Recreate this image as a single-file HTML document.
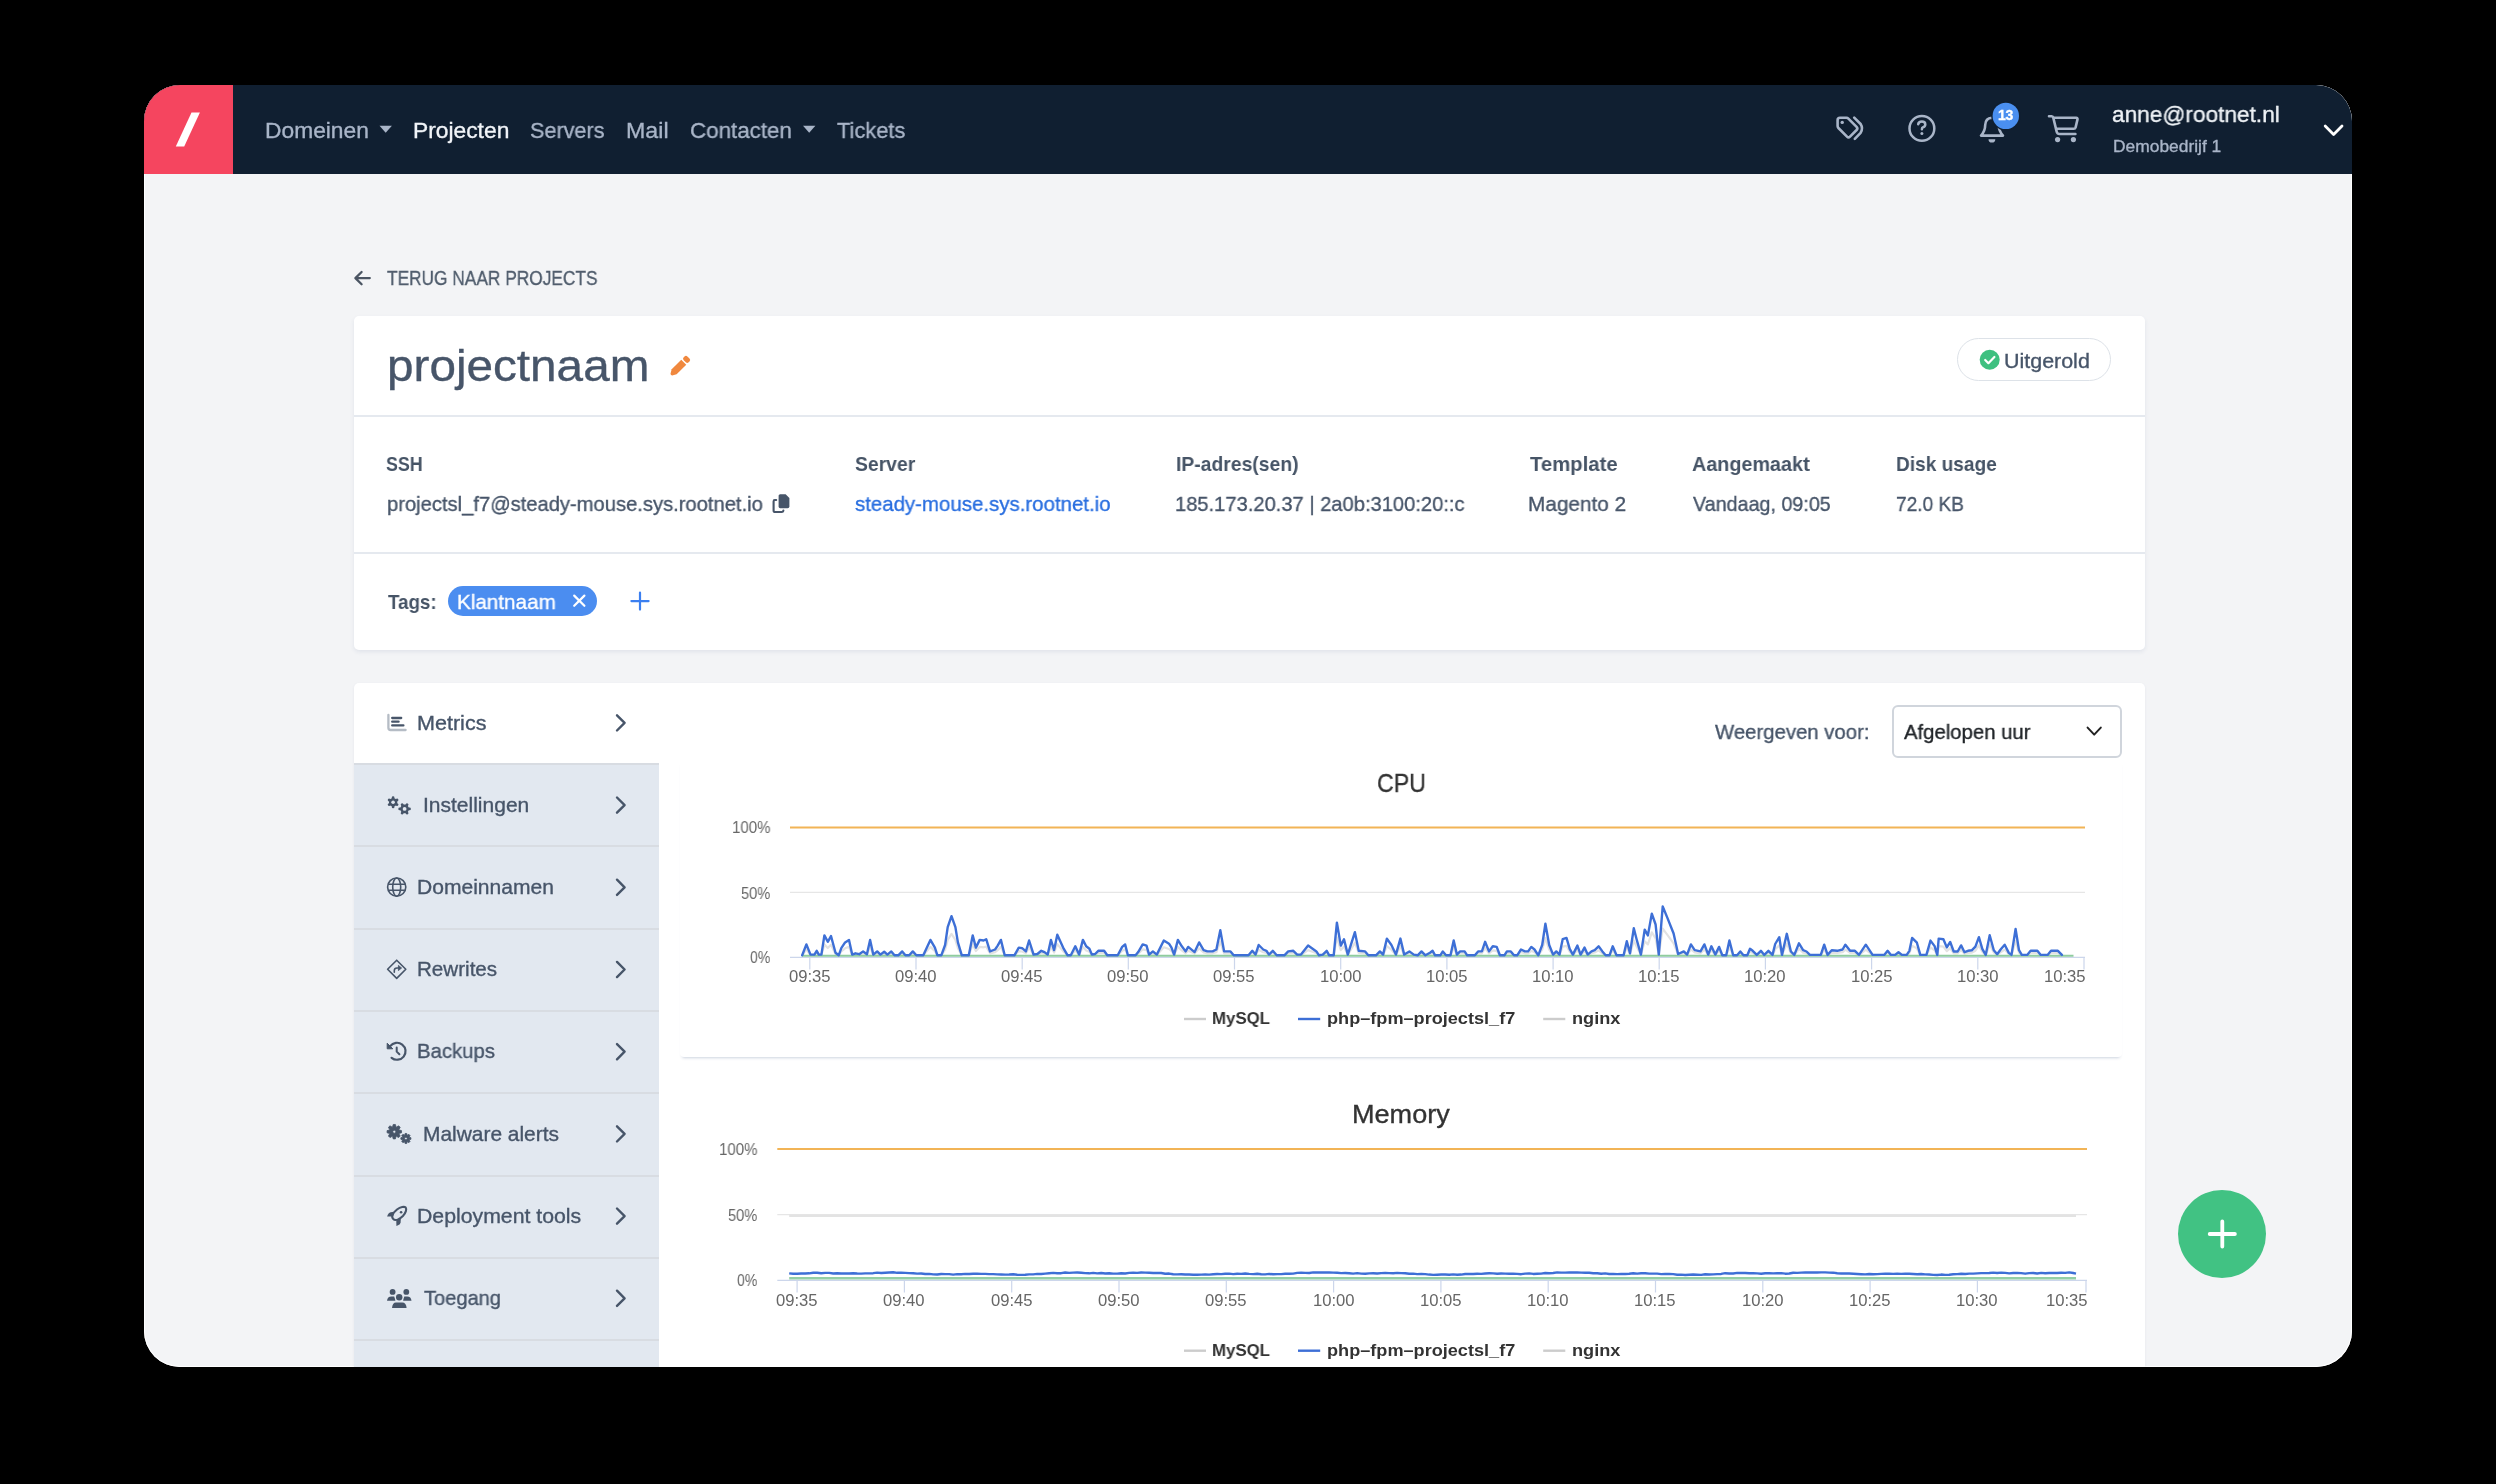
<!DOCTYPE html>
<html><head><meta charset="utf-8"><title>projectnaam</title>
<style>
html,body{margin:0;padding:0;background:#000;width:2496px;height:1484px;overflow:hidden}
#win{position:absolute;left:144px;top:85px;width:2208px;height:1281.5px;border-radius:36px;overflow:hidden;background:#f3f4f6;box-shadow:inset 0 0 0 1px #fff}
#in{position:absolute;left:-144px;top:-85px;width:2496px;height:1484px}
.b{position:absolute}
.t{position:absolute;white-space:nowrap;line-height:1;font-family:"Liberation Sans",sans-serif;transform-origin:0 0;will-change:transform;-webkit-text-stroke:0.35px currentColor}
svg{position:absolute;left:0;top:0}
</style></head><body>
<div id="win"><div id="in">
<div class="b" style="left:144px;top:85px;width:2208px;height:89px;background:#101f31"></div><div class="b" style="left:144px;top:85px;width:89px;height:89px;background:#f5455f"></div><div class="b" style="left:354px;top:316px;width:1791px;height:333.5px;background:#fff;border-radius:5px;box-shadow:0 2px 4px rgba(40,70,120,0.09)"></div><div class="b" style="left:354px;top:415px;width:1791px;height:1.6px;background:#e5e9ef"></div><div class="b" style="left:354px;top:552px;width:1791px;height:1.6px;background:#e5e9ef"></div><div class="b" style="left:1957.4px;top:338.2px;width:153.6px;height:43.3px;box-sizing:border-box;border:1.5px solid #dde2e8;border-radius:22px;background:#fff"></div><div class="b" style="left:447.5px;top:586px;width:149.2px;height:30.3px;background:#4b8df0;border-radius:16px"></div><div class="b" style="left:354px;top:683px;width:1791px;height:800px;background:#fff;border-radius:5px;box-shadow:0 1px 3px rgba(40,70,120,0.07)"></div><div class="b" style="left:354px;top:763px;width:304.5px;height:720px;background:#e2e8f0"></div><div class="b" style="left:354px;top:763.0px;width:304.5px;height:2px;background:#d8dce2"></div><div class="b" style="left:354px;top:845.3px;width:304.5px;height:2px;background:#d8dce2"></div><div class="b" style="left:354px;top:927.6px;width:304.5px;height:2px;background:#d8dce2"></div><div class="b" style="left:354px;top:1009.9px;width:304.5px;height:2px;background:#d8dce2"></div><div class="b" style="left:354px;top:1092.2px;width:304.5px;height:2px;background:#d8dce2"></div><div class="b" style="left:354px;top:1174.5px;width:304.5px;height:2px;background:#d8dce2"></div><div class="b" style="left:354px;top:1256.8px;width:304.5px;height:2px;background:#d8dce2"></div><div class="b" style="left:354px;top:1339.1px;width:304.5px;height:2px;background:#d8dce2"></div><div class="b" style="left:1891.7px;top:705.3px;width:230.3px;height:52.7px;box-sizing:border-box;border:2px solid #d0d5dc;border-radius:6px;background:#fff"></div><div class="b" style="left:680.3px;top:760px;width:1442.2px;height:296.5px;background:#fff;border-radius:4px;box-shadow:0 3px 3px -2px rgba(40,70,120,0.24)"></div><div class="b" style="left:2178.1px;top:1189.8px;width:88.4px;height:88.4px;background:#41c283;border-radius:50%"></div>
<svg width="2496" height="1484" viewBox="0 0 2496 1484"><line x1="790" y1="892.4" x2="2085" y2="892.4" stroke="#e6e6e6" stroke-width="1.2"/><line x1="790" y1="827.6" x2="2085" y2="827.6" stroke="#f2b456" stroke-width="2"/><line x1="790" y1="957.4" x2="2085" y2="957.4" stroke="#ccd6eb" stroke-width="1.2"/><line x1="809.8" y1="957.4" x2="809.8" y2="969.5" stroke="#ccd6eb" stroke-width="1.2"/><line x1="916.0" y1="957.4" x2="916.0" y2="969.5" stroke="#ccd6eb" stroke-width="1.2"/><line x1="1022.2" y1="957.4" x2="1022.2" y2="969.5" stroke="#ccd6eb" stroke-width="1.2"/><line x1="1128.3" y1="957.4" x2="1128.3" y2="969.5" stroke="#ccd6eb" stroke-width="1.2"/><line x1="1234.5" y1="957.4" x2="1234.5" y2="969.5" stroke="#ccd6eb" stroke-width="1.2"/><line x1="1340.7" y1="957.4" x2="1340.7" y2="969.5" stroke="#ccd6eb" stroke-width="1.2"/><line x1="1446.9" y1="957.4" x2="1446.9" y2="969.5" stroke="#ccd6eb" stroke-width="1.2"/><line x1="1553.1" y1="957.4" x2="1553.1" y2="969.5" stroke="#ccd6eb" stroke-width="1.2"/><line x1="1659.2" y1="957.4" x2="1659.2" y2="969.5" stroke="#ccd6eb" stroke-width="1.2"/><line x1="1765.4" y1="957.4" x2="1765.4" y2="969.5" stroke="#ccd6eb" stroke-width="1.2"/><line x1="1871.6" y1="957.4" x2="1871.6" y2="969.5" stroke="#ccd6eb" stroke-width="1.2"/><line x1="1977.8" y1="957.4" x2="1977.8" y2="969.5" stroke="#ccd6eb" stroke-width="1.2"/><line x1="2084.0" y1="957.4" x2="2084.0" y2="969.5" stroke="#ccd6eb" stroke-width="1.2"/><polyline points="802.2,955.4 806.4,949.4 810.5,955.0 814.4,955.0 816.7,952.9 818.8,955.0 821.4,955.0 824.4,944.4 827.8,948.0 831.0,944.8 835.5,954.0 838.7,955.4 841.3,951.5 845.1,948.3 849.0,946.9 852.2,955.0 855.4,954.3 859.2,954.8 863.1,953.3 866.9,954.8 870.1,946.9 873.3,955.0 877.2,953.3 880.4,955.0 884.2,953.4 887.4,955.0 891.3,953.3 894.5,955.4 898.3,955.4 902.2,953.3 905.4,955.4 909.2,955.4 912.8,953.3 916.3,955.4 923.3,955.4 930.4,946.9 934.9,951.1 937.4,955.4 941.3,955.4 945.1,949.7 947.7,939.9 951.5,933.9 955.4,939.9 957.9,948.3 961.8,955.4 968.8,955.4 972.7,944.4 975.9,951.1 979.7,946.9 983.6,947.3 986.2,946.6 990.0,953.3 995.1,952.2 997.7,950.1 1000.9,946.9 1004.7,955.4 1014.4,955.4 1018.8,951.1 1022.1,951.5 1025.9,953.3 1029.1,947.3 1033.6,955.0 1037.4,954.7 1041.3,952.9 1044.5,953.6 1047.7,955.0 1050.9,946.9 1054.1,952.5 1057.3,944.1 1063.1,951.1 1067.6,955.4 1070.8,955.4 1075.3,950.4 1079.1,955.0 1082.9,946.9 1086.2,950.4 1089.4,951.8 1091.9,955.0 1095.1,954.7 1098.3,952.9 1104.1,952.9 1107.3,955.4 1117.7,955.4 1122.2,950.8 1125.1,949.4 1127.9,955.4 1135.6,955.4 1138.2,953.6 1142.7,949.4 1146.5,950.1 1149.1,955.0 1152.9,953.3 1156.8,955.0 1163.8,947.3 1169.0,949.0 1171.5,951.1 1174.1,955.0 1177.9,946.9 1181.8,950.4 1185.6,953.3 1188.2,950.8 1194.6,953.6 1199.1,948.3 1203.6,952.5 1207.4,953.3 1212.6,953.3 1216.4,952.2 1220.3,941.6 1224.1,953.3 1230.5,953.3 1233.7,955.4 1248.5,955.4 1252.3,952.9 1255.5,955.0 1258.7,949.7 1263.2,952.2 1266.4,952.9 1269.0,955.0 1272.8,952.9 1276.7,955.4 1284.4,955.4 1288.2,953.3 1293.3,952.9 1297.2,955.0 1301.0,955.0 1308.1,950.1 1312.6,951.8 1316.4,953.3 1319.0,955.4 1322.8,955.0 1326.7,952.9 1329.2,955.4 1333.7,955.4 1336.9,937.4 1340.8,950.1 1344.0,946.6 1347.8,955.0 1354.9,942.7 1358.7,952.9 1365.1,953.3 1368.3,955.4 1376.0,955.4 1379.9,953.3 1383.1,955.0 1386.9,946.2 1391.4,949.7 1395.9,955.0 1400.4,946.2 1404.2,955.0 1409.4,953.3 1413.8,955.0 1417.7,955.4 1421.5,953.3 1425.4,955.4 1430.0,954.0 1432.6,952.9 1435.1,955.4 1440.3,955.4 1442.8,953.3 1446.0,955.4 1450.5,955.4 1453.7,947.3 1456.9,955.0 1460.1,953.3 1464.6,953.3 1467.2,955.4 1474.9,955.4 1478.1,953.3 1481.9,953.3 1485.1,948.0 1489.0,953.3 1492.8,950.4 1496.7,950.8 1499.9,955.4 1504.4,955.4 1506.9,953.3 1510.8,953.3 1514.0,955.4 1517.2,955.4 1521.0,952.2 1524.9,953.3 1528.1,953.3 1531.3,950.8 1534.5,952.2 1538.3,955.4 1542.2,949.7 1545.4,938.1 1549.2,949.7 1553.1,955.0 1556.3,953.3 1559.5,955.0 1562.7,946.6 1566.5,945.8 1569.7,951.8 1572.9,955.0 1577.4,950.1 1580.6,955.0 1584.5,951.1 1587.7,955.0 1591.5,953.3 1594.7,952.5 1598.6,950.4 1602.4,953.3 1605.6,955.4 1609.5,955.4 1612.7,950.4 1616.5,955.4 1623.6,955.4 1626.8,947.6 1630.0,954.3 1633.8,940.6 1637.1,947.6 1640.9,955.0 1644.7,941.3 1647.9,944.4 1651.8,932.4 1655.6,938.4 1658.8,955.0 1662.7,928.6 1667.2,934.6 1673.6,943.4 1678.1,954.7 1683.8,953.3 1687.1,955.0 1690.9,949.4 1694.7,952.5 1700.5,953.3 1704.4,949.4 1708.2,955.0 1711.4,950.4 1715.3,955.0 1719.1,950.8 1722.3,955.4 1726.2,955.4 1729.4,947.3 1733.2,955.4 1737.1,955.4 1740.3,953.3 1743.5,955.4 1747.3,955.4 1750.0,951.8 1752.7,952.9 1756.8,955.2 1760.9,952.9 1764.3,955.2 1768.4,952.9 1772.5,955.2 1775.2,949.2 1779.3,945.4 1782.0,955.2 1786.8,943.6 1790.9,953.3 1794.3,955.2 1799.0,948.8 1803.1,952.6 1806.5,953.3 1809.9,955.2 1820.8,955.2 1824.2,949.6 1827.6,955.2 1831.7,952.6 1837.2,952.9 1842.6,952.2 1845.4,949.6 1850.1,952.9 1854.9,952.9 1859.0,955.2 1865.8,949.6 1872.6,955.2 1879.4,955.2 1884.2,955.2 1887.6,952.9 1891.0,955.2 1895.1,955.2 1898.5,953.7 1901.9,955.2 1906.7,955.2 1909.4,952.9 1912.1,945.8 1916.9,948.4 1920.3,955.2 1926.4,955.2 1930.5,947.3 1934.6,950.3 1937.3,955.2 1938.7,946.2 1943.4,946.6 1946.8,951.1 1950.2,948.1 1953.7,953.3 1957.7,953.3 1961.1,949.9 1964.5,953.7 1968.0,952.9 1972.0,952.6 1975.4,950.7 1978.9,945.4 1982.3,951.8 1985.7,955.2 1989.7,944.3 1993.8,952.6 1997.2,954.8 2000.6,952.2 2004.7,949.6 2008.8,954.1 2011.5,955.2 2015.6,941.0 2019.0,952.6 2021.8,955.2 2027.2,955.2 2030.6,952.9 2037.4,952.9 2040.8,955.2 2047.6,955.2 2051.0,952.9 2057.9,952.9 2061.9,955.2" fill="none" stroke="#e2e2e2" stroke-width="2.2" stroke-linejoin="round"/><line x1="802" y1="955.8" x2="2073.5" y2="955.8" stroke="#8fcc9f" stroke-width="2"/><polyline points="802.2,955.3 806.4,944.4 810.5,954.6 814.4,954.6 816.7,950.8 818.8,954.6 821.4,954.6 824.4,935.4 827.8,941.8 831.0,936.0 835.5,952.7 838.7,955.3 841.3,948.2 845.1,942.4 849.0,939.9 852.2,954.6 855.4,953.3 859.2,954.2 863.1,951.4 866.9,954.2 870.1,939.9 873.3,954.6 877.2,951.4 880.4,954.6 884.2,951.7 887.4,954.6 891.3,951.4 894.5,955.3 898.3,955.3 902.2,951.4 905.4,955.3 909.2,955.3 912.8,951.4 916.3,955.3 923.3,955.3 930.4,939.9 934.9,947.6 937.4,955.3 941.3,955.3 945.1,945.0 947.7,927.1 951.5,916.2 955.4,927.1 957.9,942.4 961.8,955.3 968.8,955.3 972.7,935.4 975.9,947.6 979.7,939.9 983.6,940.5 986.2,939.2 990.0,951.4 995.1,949.5 997.7,945.6 1000.9,939.9 1004.7,955.3 1014.4,955.3 1018.8,947.6 1022.1,948.2 1025.9,951.4 1029.1,940.5 1033.6,954.6 1037.4,954.0 1041.3,950.8 1044.5,952.1 1047.7,954.6 1050.9,939.9 1054.1,950.1 1057.3,934.7 1063.1,947.6 1067.6,955.3 1070.8,955.3 1075.3,946.3 1079.1,954.6 1082.9,939.9 1086.2,946.3 1089.4,948.8 1091.9,954.6 1095.1,954.0 1098.3,950.8 1104.1,950.8 1107.3,955.3 1117.7,955.3 1122.2,946.9 1125.1,944.4 1127.9,955.3 1135.6,955.3 1138.2,952.1 1142.7,944.4 1146.5,945.6 1149.1,954.6 1152.9,951.4 1156.8,954.6 1163.8,940.5 1169.0,943.7 1171.5,947.6 1174.1,954.6 1177.9,939.9 1181.8,946.3 1185.6,951.4 1188.2,946.9 1194.6,952.1 1199.1,942.4 1203.6,950.1 1207.4,951.4 1212.6,951.4 1216.4,949.5 1220.3,930.3 1224.1,951.4 1230.5,951.4 1233.7,955.3 1248.5,955.3 1252.3,950.8 1255.5,954.6 1258.7,945.0 1263.2,949.5 1266.4,950.8 1269.0,954.6 1272.8,950.8 1276.7,955.3 1284.4,955.3 1288.2,951.4 1293.3,950.8 1297.2,954.6 1301.0,954.6 1308.1,945.6 1312.6,948.8 1316.4,951.4 1319.0,955.3 1322.8,954.6 1326.7,950.8 1329.2,955.3 1333.7,955.3 1336.9,922.6 1340.8,945.6 1344.0,939.2 1347.8,954.6 1354.9,932.2 1358.7,950.8 1365.1,951.4 1368.3,955.3 1376.0,955.3 1379.9,951.4 1383.1,954.6 1386.9,938.6 1391.4,945.0 1395.9,954.6 1400.4,938.6 1404.2,954.6 1409.4,951.4 1413.8,954.6 1417.7,955.3 1421.5,951.4 1425.4,955.3 1430.0,952.7 1432.6,950.8 1435.1,955.3 1440.3,955.3 1442.8,951.4 1446.0,955.3 1450.5,955.3 1453.7,940.5 1456.9,954.6 1460.1,951.4 1464.6,951.4 1467.2,955.3 1474.9,955.3 1478.1,951.4 1481.9,951.4 1485.1,941.8 1489.0,951.4 1492.8,946.3 1496.7,946.9 1499.9,955.3 1504.4,955.3 1506.9,951.4 1510.8,951.4 1514.0,955.3 1517.2,955.3 1521.0,949.5 1524.9,951.4 1528.1,951.4 1531.3,946.9 1534.5,949.5 1538.3,955.3 1542.2,945.0 1545.4,923.8 1549.2,945.0 1553.1,954.6 1556.3,951.4 1559.5,954.6 1562.7,939.2 1566.5,937.9 1569.7,948.8 1572.9,954.6 1577.4,945.6 1580.6,954.6 1584.5,947.6 1587.7,954.6 1591.5,951.4 1594.7,950.1 1598.6,946.3 1602.4,951.4 1605.6,955.3 1609.5,955.3 1612.7,946.3 1616.5,955.3 1623.6,955.3 1626.8,941.2 1630.0,953.3 1633.8,928.3 1637.1,941.2 1640.9,954.6 1644.7,929.6 1647.9,935.4 1651.8,913.6 1655.6,924.5 1658.8,954.6 1662.7,906.5 1667.2,917.4 1673.6,933.5 1678.1,954.0 1683.8,951.4 1687.1,954.6 1690.9,944.4 1694.7,950.1 1700.5,951.4 1704.4,944.4 1708.2,954.6 1711.4,946.3 1715.3,954.6 1719.1,946.9 1722.3,955.3 1726.2,955.3 1729.4,940.5 1733.2,955.3 1737.1,955.3 1740.3,951.4 1743.5,955.3 1747.3,955.3 1750.0,948.8 1752.7,950.8 1756.8,954.9 1760.9,950.8 1764.3,954.9 1768.4,950.8 1772.5,954.9 1775.2,944.0 1779.3,937.2 1782.0,954.9 1786.8,933.8 1790.9,951.5 1794.3,954.9 1799.0,943.3 1803.1,950.2 1806.5,951.5 1809.9,954.9 1820.8,954.9 1824.2,944.7 1827.6,954.9 1831.7,950.2 1837.2,950.8 1842.6,949.5 1845.4,944.7 1850.1,950.8 1854.9,950.8 1859.0,954.9 1865.8,944.7 1872.6,954.9 1879.4,954.9 1884.2,954.9 1887.6,950.8 1891.0,954.9 1895.1,954.9 1898.5,952.2 1901.9,954.9 1906.7,954.9 1909.4,950.8 1912.1,937.9 1916.9,942.7 1920.3,954.9 1926.4,954.9 1930.5,940.6 1934.6,946.1 1937.3,954.9 1938.7,938.6 1943.4,939.3 1946.8,947.4 1950.2,942.0 1953.7,951.5 1957.7,951.5 1961.1,945.4 1964.5,952.2 1968.0,950.8 1972.0,950.2 1975.4,946.7 1978.9,937.2 1982.3,948.8 1985.7,954.9 1989.7,935.2 1993.8,950.2 1997.2,954.2 2000.6,949.5 2004.7,944.7 2008.8,952.9 2011.5,954.9 2015.6,929.0 2019.0,950.2 2021.8,954.9 2027.2,954.9 2030.6,950.8 2037.4,950.8 2040.8,954.9 2047.6,954.9 2051.0,950.8 2057.9,950.8 2061.9,954.9" fill="none" stroke="#3d6fd6" stroke-width="2.4" stroke-linejoin="round" stroke-linecap="round"/><line x1="777.3" y1="1214.6" x2="2087" y2="1214.6" stroke="#e6e6e6" stroke-width="1.2"/><line x1="777.3" y1="1148.9" x2="2087" y2="1148.9" stroke="#f2b456" stroke-width="2"/><line x1="777.3" y1="1280.3" x2="2087" y2="1280.3" stroke="#ccd6eb" stroke-width="1.2"/><line x1="797.1" y1="1280.3" x2="797.1" y2="1292.5" stroke="#ccd6eb" stroke-width="1.2"/><line x1="904.4" y1="1280.3" x2="904.4" y2="1292.5" stroke="#ccd6eb" stroke-width="1.2"/><line x1="1011.7" y1="1280.3" x2="1011.7" y2="1292.5" stroke="#ccd6eb" stroke-width="1.2"/><line x1="1119.0" y1="1280.3" x2="1119.0" y2="1292.5" stroke="#ccd6eb" stroke-width="1.2"/><line x1="1226.3" y1="1280.3" x2="1226.3" y2="1292.5" stroke="#ccd6eb" stroke-width="1.2"/><line x1="1333.6" y1="1280.3" x2="1333.6" y2="1292.5" stroke="#ccd6eb" stroke-width="1.2"/><line x1="1440.9" y1="1280.3" x2="1440.9" y2="1292.5" stroke="#ccd6eb" stroke-width="1.2"/><line x1="1548.2" y1="1280.3" x2="1548.2" y2="1292.5" stroke="#ccd6eb" stroke-width="1.2"/><line x1="1655.5" y1="1280.3" x2="1655.5" y2="1292.5" stroke="#ccd6eb" stroke-width="1.2"/><line x1="1762.8" y1="1280.3" x2="1762.8" y2="1292.5" stroke="#ccd6eb" stroke-width="1.2"/><line x1="1870.1" y1="1280.3" x2="1870.1" y2="1292.5" stroke="#ccd6eb" stroke-width="1.2"/><line x1="1977.4" y1="1280.3" x2="1977.4" y2="1292.5" stroke="#ccd6eb" stroke-width="1.2"/><line x1="2086.0" y1="1280.3" x2="2086.0" y2="1292.5" stroke="#ccd6eb" stroke-width="1.2"/><line x1="789.2" y1="1215.8" x2="2076" y2="1215.8" stroke="#e3e3e3" stroke-width="2.4"/><line x1="789.2" y1="1278.3" x2="2076" y2="1278.3" stroke="#93cfa6" stroke-width="2.6"/><polyline points="789.2,1273.40 793.2,1273.81 797.2,1273.81 801.2,1273.48 805.2,1273.46 809.2,1273.32 813.2,1272.81 817.2,1272.70 821.2,1273.25 825.2,1272.86 829.2,1272.90 833.2,1273.50 837.2,1273.22 841.2,1273.56 845.2,1273.39 849.2,1273.55 853.2,1273.23 857.2,1273.55 861.2,1273.66 865.2,1273.33 869.2,1273.36 873.2,1273.18 877.2,1272.61 881.2,1272.96 885.2,1272.73 889.2,1272.45 893.2,1272.22 897.2,1272.82 901.2,1272.60 905.2,1272.88 909.2,1273.15 913.2,1273.23 917.2,1273.58 921.2,1273.44 925.2,1273.94 929.2,1273.89 933.2,1274.40 937.2,1274.49 941.2,1274.03 945.2,1274.09 949.2,1274.14 953.2,1274.62 957.2,1274.17 961.2,1274.21 965.2,1273.88 969.2,1273.93 973.2,1273.77 977.2,1273.70 981.2,1273.85 985.2,1273.87 989.2,1274.16 993.2,1274.09 997.2,1274.37 1001.2,1274.45 1005.2,1274.66 1009.2,1274.54 1013.2,1274.26 1017.2,1274.79 1021.2,1274.85 1025.2,1274.76 1029.2,1274.42 1033.2,1274.37 1037.2,1273.83 1041.2,1274.05 1045.2,1273.65 1049.2,1273.22 1053.2,1272.86 1057.2,1273.24 1061.2,1273.19 1065.2,1272.47 1069.2,1272.92 1073.2,1272.65 1077.2,1272.52 1081.2,1272.70 1085.2,1273.14 1089.2,1273.32 1093.2,1272.86 1097.2,1273.36 1101.2,1273.03 1105.2,1273.55 1109.2,1273.28 1113.2,1273.64 1117.2,1273.65 1121.2,1273.23 1125.2,1273.47 1129.2,1272.88 1133.2,1272.62 1137.2,1272.91 1141.2,1272.48 1145.2,1272.60 1149.2,1272.79 1153.2,1273.03 1157.2,1272.85 1161.2,1272.95 1165.2,1273.74 1169.2,1273.57 1173.2,1274.24 1177.2,1274.41 1181.2,1274.23 1185.2,1274.43 1189.2,1274.57 1193.2,1274.71 1197.2,1274.68 1201.2,1274.60 1205.2,1274.56 1209.2,1274.67 1213.2,1274.24 1217.2,1274.05 1221.2,1274.13 1225.2,1273.69 1229.2,1273.66 1233.2,1274.09 1237.2,1273.77 1241.2,1273.83 1245.2,1273.52 1249.2,1273.88 1253.2,1274.09 1257.2,1273.78 1261.2,1274.27 1265.2,1274.33 1269.2,1273.93 1273.2,1274.29 1277.2,1274.09 1281.2,1274.11 1285.2,1273.72 1289.2,1273.77 1293.2,1273.58 1297.2,1272.86 1301.2,1272.68 1305.2,1272.92 1309.2,1272.98 1313.2,1272.38 1317.2,1272.47 1321.2,1272.56 1325.2,1272.42 1329.2,1272.54 1333.2,1272.63 1337.2,1272.81 1341.2,1273.13 1345.2,1273.07 1349.2,1273.25 1353.2,1273.63 1357.2,1273.17 1361.2,1273.58 1365.2,1273.69 1369.2,1273.35 1373.2,1273.22 1377.2,1273.55 1381.2,1273.08 1385.2,1272.97 1389.2,1273.10 1393.2,1273.27 1397.2,1272.87 1401.2,1273.10 1405.2,1273.22 1409.2,1273.72 1413.2,1273.62 1417.2,1274.12 1421.2,1273.85 1425.2,1274.17 1429.2,1274.57 1433.2,1274.88 1437.2,1274.68 1441.2,1274.57 1445.2,1274.50 1449.2,1274.74 1453.2,1274.40 1457.2,1274.70 1461.2,1274.57 1465.2,1273.94 1469.2,1273.83 1473.2,1274.05 1477.2,1273.81 1481.2,1273.83 1485.2,1273.45 1489.2,1273.28 1493.2,1273.41 1497.2,1273.81 1501.2,1273.51 1505.2,1273.64 1509.2,1273.76 1513.2,1273.82 1517.2,1273.84 1521.2,1274.18 1525.2,1273.60 1529.2,1273.40 1533.2,1273.93 1537.2,1273.72 1541.2,1273.61 1545.2,1273.03 1549.2,1273.20 1553.2,1273.01 1557.2,1272.37 1561.2,1272.63 1565.2,1272.64 1569.2,1272.52 1573.2,1272.47 1577.2,1272.41 1581.2,1272.59 1585.2,1272.68 1589.2,1272.75 1593.2,1273.30 1597.2,1273.27 1601.2,1273.79 1605.2,1273.37 1609.2,1274.05 1613.2,1273.95 1617.2,1274.11 1621.2,1274.06 1625.2,1274.00 1629.2,1273.70 1633.2,1273.23 1637.2,1273.68 1641.2,1273.24 1645.2,1273.32 1649.2,1273.61 1653.2,1273.58 1657.2,1273.61 1661.2,1274.12 1665.2,1274.05 1669.2,1274.04 1673.2,1274.16 1677.2,1274.75 1681.2,1274.62 1685.2,1274.93 1689.2,1274.68 1693.2,1274.57 1697.2,1274.75 1701.2,1274.85 1705.2,1274.25 1709.2,1274.51 1713.2,1274.40 1717.2,1274.12 1721.2,1273.94 1725.2,1273.19 1729.2,1273.49 1733.2,1273.55 1737.2,1272.92 1741.2,1273.06 1745.2,1273.07 1749.2,1273.31 1753.2,1273.30 1757.2,1273.42 1761.2,1273.70 1765.2,1273.22 1769.2,1273.28 1773.2,1273.33 1777.2,1273.28 1781.2,1273.16 1785.2,1273.68 1789.2,1273.45 1793.2,1272.76 1797.2,1272.89 1801.2,1272.60 1805.2,1272.47 1809.2,1272.41 1813.2,1272.56 1817.2,1272.52 1821.2,1272.42 1825.2,1272.40 1829.2,1272.64 1833.2,1272.68 1837.2,1273.19 1841.2,1273.52 1845.2,1273.49 1849.2,1273.47 1853.2,1273.70 1857.2,1273.96 1861.2,1274.19 1865.2,1274.35 1869.2,1274.06 1873.2,1274.31 1877.2,1274.12 1881.2,1273.90 1885.2,1273.77 1889.2,1273.78 1893.2,1273.88 1897.2,1273.66 1901.2,1273.87 1905.2,1273.75 1909.2,1273.69 1913.2,1274.01 1917.2,1274.26 1921.2,1273.97 1925.2,1274.35 1929.2,1274.47 1933.2,1274.88 1937.2,1274.97 1941.2,1274.57 1945.2,1274.89 1949.2,1274.71 1953.2,1274.20 1957.2,1274.15 1961.2,1273.71 1965.2,1273.97 1969.2,1273.65 1973.2,1273.60 1977.2,1273.36 1981.2,1273.14 1985.2,1273.09 1989.2,1272.93 1993.2,1272.61 1997.2,1272.99 2001.2,1272.65 2005.2,1272.84 2009.2,1273.38 2013.2,1272.96 2017.2,1273.07 2021.2,1273.12 2025.2,1273.68 2029.2,1273.17 2033.2,1273.00 2037.2,1273.49 2041.2,1272.87 2045.2,1273.25 2049.2,1273.01 2053.2,1273.01 2057.2,1273.01 2061.2,1272.70 2065.2,1272.85 2069.2,1272.37 2073.2,1272.98 2076,1273.6" fill="none" stroke="#3d6fd6" stroke-width="2.4" stroke-linejoin="round"/><line x1="1184" y1="1019" x2="1206" y2="1019" stroke="#cccccc" stroke-width="2.4"/><line x1="1298" y1="1019" x2="1320.2" y2="1019" stroke="#3d6fd6" stroke-width="2.4"/><line x1="1543.2" y1="1019" x2="1565.3" y2="1019" stroke="#cccccc" stroke-width="2.4"/><line x1="1184" y1="1350.7" x2="1206" y2="1350.7" stroke="#cccccc" stroke-width="2.4"/><line x1="1298" y1="1350.7" x2="1320.2" y2="1350.7" stroke="#3d6fd6" stroke-width="2.4"/><line x1="1543.2" y1="1350.7" x2="1565.3" y2="1350.7" stroke="#cccccc" stroke-width="2.4"/><polygon points="191.5,112.4 199.9,112.4 184.2,146.6 175.8,146.6" fill="#ffffff"/><polygon points="379.5,125.8 391.9,125.8 385.7,132.8" fill="#a9b5c8"/><polygon points="803,125.8 815.4,125.8 809.2,132.8" fill="#a9b5c8"/><g fill="none" stroke="#a9b5c8" stroke-width="2.6" stroke-linecap="round" stroke-linejoin="round"><path d="M1837.6,120.2 Q1837.6,117.8 1840,117.8 L1846.5,117.8 Q1847.6,117.8 1848.4,118.6 L1856.6,126.8 Q1858.1,128.4 1856.6,130 L1850,136.6 Q1848.5,138.1 1847,136.6 L1838.4,128 Q1837.6,127.2 1837.6,126 Z"/><path d="M1854.2,117.6 L1860.6,124 Q1863.4,128.4 1860.6,132.8 L1854.8,138.8"/></g><circle cx="1842.2" cy="122.4" r="1.7" fill="#a9b5c8"/><circle cx="1921.9" cy="128.4" r="12.4" fill="none" stroke="#a9b5c8" stroke-width="2.5"/><path d="M1918.2,124.2 Q1918.6,121.6 1921.9,121.6 Q1925.3,121.6 1925.3,124.4 Q1925.3,126.4 1922.8,127.4 Q1921.9,127.8 1921.9,129.2" fill="none" stroke="#a9b5c8" stroke-width="2.5" stroke-linecap="round"/><circle cx="1921.9" cy="133.5" r="1.5" fill="#a9b5c8"/><path d="M1991.8,117.8 Q1985.5,118.2 1985.2,125 Q1985.2,131 1981,135.6 L2003,135.6 Q1998.8,131 1998.6,125 Q1998.2,118.2 1991.8,117.8 Z" fill="none" stroke="#a9b5c8" stroke-width="2.6" stroke-linejoin="round"/><path d="M1988.5,139.2 A3.4,3.4 0 0 0 1995.3,139.2 Z" fill="#a9b5c8"/><circle cx="2005.8" cy="115.9" r="14.6" fill="#101f31"/><circle cx="2005.8" cy="115.9" r="13.2" fill="#4a8ff0"/><g fill="none" stroke="#a9b5c8" stroke-width="2.6" stroke-linecap="round" stroke-linejoin="round"><path d="M2049,116.2 L2051.6,116.2 Q2053,116.2 2053.3,117.8 L2056.6,131.4 Q2057,134 2059.6,134 L2075.4,134"/><path d="M2054,117.8 L2076.2,117.8 Q2077.8,117.8 2077.5,119.4 L2075.6,127.4 Q2075.2,128.8 2073.8,128.8 L2057,128.8"/></g><circle cx="2057.6" cy="139.6" r="2.6" fill="#a9b5c8"/><circle cx="2073.4" cy="139.6" r="2.6" fill="#a9b5c8"/><path d="M2325.2,126 L2333.6,134.4 L2342,126" fill="none" stroke="#ffffff" stroke-width="2.8" stroke-linecap="round" stroke-linejoin="round"/><path d="M369.8,278.1 L355.6,278.1 M361.6,272 L355.4,278.1 L361.6,284.2" fill="none" stroke="#4b5563" stroke-width="2.3" stroke-linecap="round" stroke-linejoin="round"/><g transform="translate(680.8,365.2) rotate(-45)"><path d="M-9.4,-3.5 L4.2,-3.5 L4.2,3.5 L-9.4,3.5 L-13.4,1.2 Q-14.2,0 -13.4,-1.2 Z" fill="#f0883e"/><rect x="5.6" y="-3.5" width="5.2" height="7" rx="2" fill="#f0883e"/></g><path d="M778.6,495.8 Q778.6,494.2 780.2,494.2 L785.6,494.2 L789.4,498 L789.4,506.4 Q789.4,508.2 787.6,508.2 L780.2,508.2 Q778.6,508.2 778.6,506.4 Z" fill="#475569"/><path d="M776.2,500 L774.8,500 Q773.6,500 773.6,501.4 L773.6,510.4 Q773.6,512 775.2,512 L782,512 Q783.4,512 783.4,510.6" fill="none" stroke="#475569" stroke-width="2.1" stroke-linecap="round"/><circle cx="1989.7" cy="359.8" r="10" fill="#3ec080"/><path d="M1985.2,360 L1988.4,363.2 L1994.4,357" fill="none" stroke="#fff" stroke-width="2.2" stroke-linecap="round" stroke-linejoin="round"/><path d="M574.2,595.6 L584.4,605.8 M584.4,595.6 L574.2,605.8" stroke="#fff" stroke-width="2.2" stroke-linecap="round"/><path d="M640,592.6 L640,609.6 M631.4,601.1 L648.6,601.1" stroke="#3b7ff0" stroke-width="2.2" stroke-linecap="round"/><path d="M617,715.3 L624.6,722.9 L617,730.5" fill="none" stroke="#475569" stroke-width="2.4" stroke-linecap="round" stroke-linejoin="round"/><path d="M617,797.5 L624.6,805.1 L617,812.7" fill="none" stroke="#475569" stroke-width="2.4" stroke-linecap="round" stroke-linejoin="round"/><path d="M617,879.7 L624.6,887.3 L617,894.9" fill="none" stroke="#475569" stroke-width="2.4" stroke-linecap="round" stroke-linejoin="round"/><path d="M617,961.9 L624.6,969.5 L617,977.1" fill="none" stroke="#475569" stroke-width="2.4" stroke-linecap="round" stroke-linejoin="round"/><path d="M617,1044.1 L624.6,1051.7 L617,1059.3" fill="none" stroke="#475569" stroke-width="2.4" stroke-linecap="round" stroke-linejoin="round"/><path d="M617,1126.3 L624.6,1133.9 L617,1141.5" fill="none" stroke="#475569" stroke-width="2.4" stroke-linecap="round" stroke-linejoin="round"/><path d="M617,1208.5 L624.6,1216.1 L617,1223.7" fill="none" stroke="#475569" stroke-width="2.4" stroke-linecap="round" stroke-linejoin="round"/><path d="M617,1290.7 L624.6,1298.3 L617,1305.9" fill="none" stroke="#475569" stroke-width="2.4" stroke-linecap="round" stroke-linejoin="round"/><path d="M388.4,715 L388.4,727.8 Q388.4,730 390.6,730 L405.6,730" fill="none" stroke="#b5bcc5" stroke-width="2.3" stroke-linecap="round"/><path d="M392.2,718 L401.2,718 M392.2,721.7 L398.6,721.7 M392.2,725.4 L403.4,725.4" stroke="#475569" stroke-width="2.3" stroke-linecap="round"/><circle cx="393.1" cy="802.3" r="4.1" fill="#475569"/><line x1="393.10" y1="802.30" x2="393.10" y2="797.70" stroke="#475569" stroke-width="2.7" stroke-linecap="round"/><line x1="393.10" y1="802.30" x2="397.08" y2="800.00" stroke="#475569" stroke-width="2.7" stroke-linecap="round"/><line x1="393.10" y1="802.30" x2="397.08" y2="804.60" stroke="#475569" stroke-width="2.7" stroke-linecap="round"/><line x1="393.10" y1="802.30" x2="393.10" y2="806.90" stroke="#475569" stroke-width="2.7" stroke-linecap="round"/><line x1="393.10" y1="802.30" x2="389.12" y2="804.60" stroke="#475569" stroke-width="2.7" stroke-linecap="round"/><line x1="393.10" y1="802.30" x2="389.12" y2="800.00" stroke="#475569" stroke-width="2.7" stroke-linecap="round"/><circle cx="393.1" cy="802.3" r="1.8" fill="#e2e8f0"/><circle cx="404.6" cy="808.9" r="4.3" fill="#475569"/><line x1="404.60" y1="808.90" x2="409.50" y2="808.90" stroke="#475569" stroke-width="2.8" stroke-linecap="round"/><line x1="404.60" y1="808.90" x2="407.05" y2="813.14" stroke="#475569" stroke-width="2.8" stroke-linecap="round"/><line x1="404.60" y1="808.90" x2="402.15" y2="813.14" stroke="#475569" stroke-width="2.8" stroke-linecap="round"/><line x1="404.60" y1="808.90" x2="399.70" y2="808.90" stroke="#475569" stroke-width="2.8" stroke-linecap="round"/><line x1="404.60" y1="808.90" x2="402.15" y2="804.66" stroke="#475569" stroke-width="2.8" stroke-linecap="round"/><line x1="404.60" y1="808.90" x2="407.05" y2="804.66" stroke="#475569" stroke-width="2.8" stroke-linecap="round"/><circle cx="404.6" cy="808.9" r="1.9" fill="#e2e8f0"/><g fill="none" stroke="#475569" stroke-width="1.6"><circle cx="396.7" cy="887.1" r="9.1"/><ellipse cx="396.7" cy="887.1" rx="4" ry="9.1"/><path d="M388.2,884.2 L405.2,884.2 M388.2,890.2 L405.2,890.2"/></g><g fill="none" stroke="#475569" stroke-width="1.6" stroke-linejoin="round"><path d="M396.7,960.2 L405.8,969.3 L396.7,978.4 L387.6,969.3 Z"/><path d="M394.3,972.2 L394.3,970.6 Q394.3,968 397,968 L399.4,968" stroke-linecap="round"/></g><path d="M398.4,965.4 L401.6,968 L398.4,970.6 Z" fill="#475569" stroke="#475569" stroke-width="0.8" stroke-linejoin="round"/><path d="M390.2,1046.2 A8.5,8.5 0 1 1 391.6,1057.8" fill="none" stroke="#475569" stroke-width="2.2" stroke-linecap="round"/><path d="M387.2,1043.2 L387.2,1048.8 L392.8,1048.8 Z" fill="#475569" stroke="#475569" stroke-width="1" stroke-linejoin="round"/><path d="M396.7,1047.4 L396.7,1051.6 L399.4,1054.2" fill="none" stroke="#475569" stroke-width="2" stroke-linecap="round" stroke-linejoin="round"/><path d="M392.53,1127.03 L393.21,1124.48 L395.39,1124.48 L396.07,1127.03 L396.35,1127.14 L398.63,1125.82 L400.18,1127.37 L398.86,1129.65 L398.97,1129.93 L401.52,1130.61 L401.52,1132.79 L398.97,1133.47 L398.86,1133.75 L400.18,1136.03 L398.63,1137.58 L396.35,1136.26 L396.07,1136.37 L395.39,1138.92 L393.21,1138.92 L392.53,1136.37 L392.25,1136.26 L389.97,1137.58 L388.42,1136.03 L389.74,1133.75 L389.63,1133.47 L387.08,1132.79 L387.08,1130.61 L389.63,1129.93 L389.74,1129.65 L388.42,1127.37 L389.97,1125.82 L392.25,1127.14 Z M395.80,1131.7 A1.5,1.5 0 1 0 392.80,1131.7 A1.5,1.5 0 1 0 395.80,1131.7 Z" fill="#475569" fill-rule="evenodd" stroke="#475569" stroke-width="0.8" stroke-linejoin="round"/><path d="M404.63,1135.13 L405.09,1133.47 L406.71,1133.47 L407.17,1135.13 L407.38,1135.22 L408.89,1134.37 L410.03,1135.51 L409.18,1137.02 L409.27,1137.23 L410.93,1137.69 L410.93,1139.31 L409.27,1139.77 L409.18,1139.98 L410.03,1141.49 L408.89,1142.63 L407.38,1141.78 L407.17,1141.87 L406.71,1143.53 L405.09,1143.53 L404.63,1141.87 L404.42,1141.78 L402.91,1142.63 L401.77,1141.49 L402.62,1139.98 L402.53,1139.77 L400.87,1139.31 L400.87,1137.69 L402.53,1137.23 L402.62,1137.02 L401.77,1135.51 L402.91,1134.37 L404.42,1135.22 Z M407.20,1138.5 A1.3,1.3 0 1 0 404.60,1138.5 A1.3,1.3 0 1 0 407.20,1138.5 Z" fill="#475569" fill-rule="evenodd" stroke="#475569" stroke-width="0.8" stroke-linejoin="round"/><g transform="translate(399.2,1213.4) rotate(-42)"><path d="M-8.2,0 C-8.2,-3.6 -3.5,-4.6 1,-4.4 C5.5,-4.1 8.6,-1.8 8.8,0 C8.6,1.8 5.5,4.1 1,4.4 C-3.5,4.6 -8.2,3.6 -8.2,0 Z" fill="none" stroke="#475569" stroke-width="2.1" stroke-linejoin="round"/></g><circle cx="401.1" cy="1212.3" r="1.3" fill="#475569"/><path d="M394.2,1211.8 L390.6,1212.2 Q388.8,1212.6 387.8,1214.8 L387.1,1216.5 L393,1216.6 Z" fill="#475569"/><path d="M400.8,1218.6 L400.6,1222.4 Q400.3,1224.3 398.1,1225.3 L396.4,1226 L396.3,1220 Z" fill="#475569"/><g fill="#475569"><circle cx="392.6" cy="1291.9" r="2.9"/><circle cx="406.3" cy="1291.9" r="2.9"/><circle cx="399.2" cy="1297.2" r="3.2"/><path d="M387,1300.8 Q387.4,1296.4 391.4,1296.4 L394.2,1296.4 Q395,1298.6 395.4,1300.8 Z"/><path d="M411.5,1300.8 Q411.1,1296.4 407.1,1296.4 L404.3,1296.4 Q403.5,1298.6 403.1,1300.8 Z"/><path d="M392,1308 Q392.4,1302.4 396,1302.4 L402.4,1302.4 Q406.2,1302.4 406.6,1308 Z"/></g><path d="M2087.6,727.6 L2094.2,734.6 L2100.8,727.6" fill="none" stroke="#222" stroke-width="2" stroke-linecap="round" stroke-linejoin="round"/><path d="M2222.3,1221.4 L2222.3,1246.6 M2209.7,1234 L2234.9,1234" stroke="#fff" stroke-width="3.8" stroke-linecap="round"/></svg>
<div class="t" style="left:264.80px;top:119.10px;font-size:22.8px;font-weight:400;color:#a9b5c8;">Domeinen</div><div class="t" style="left:413.00px;top:119.10px;font-size:22.8px;font-weight:400;color:#f1f4f8;">Projecten</div><div class="t" style="left:530.05px;top:119.10px;font-size:22.8px;font-weight:400;color:#a9b5c8;transform:scaleX(0.9481);">Servers</div><div class="t" style="left:625.56px;top:119.10px;font-size:22.8px;font-weight:400;color:#a9b5c8;transform:scaleX(1.0179);">Mail</div><div class="t" style="left:690.02px;top:119.10px;font-size:22.8px;font-weight:400;color:#a9b5c8;transform:scaleX(0.9804);">Contacten</div><div class="t" style="left:837.00px;top:119.10px;font-size:22.8px;font-weight:400;color:#a9b5c8;transform:scaleX(0.9577);">Tickets</div><div class="t" style="left:2111.81px;top:102.90px;font-size:22.8px;font-weight:400;color:#eef2f6;transform:scaleX(0.9934);">anne@rootnet.nl</div><div class="t" style="left:2112.50px;top:137.77px;font-size:17.4px;font-weight:400;color:#a9b5c8;">Demobedrijf 1</div><div class="t" style="left:387.40px;top:268.29px;font-size:20.8px;font-weight:400;color:#505d6d;transform:scaleX(0.8317);">TERUG NAAR PROJECTS</div><div class="t" style="left:387.12px;top:343.40px;font-size:45px;font-weight:400;color:#475569;transform:scaleX(1.0595);">projectnaam</div><div class="t" style="left:386.45px;top:453.02px;font-size:21px;font-weight:700;color:#465466;transform:scaleX(0.8488);-webkit-text-stroke:0;">SSH</div><div class="t" style="left:854.88px;top:453.02px;font-size:21px;font-weight:700;color:#465466;transform:scaleX(0.9219);-webkit-text-stroke:0;">Server</div><div class="t" style="left:1176.08px;top:453.02px;font-size:21px;font-weight:700;color:#465466;transform:scaleX(0.9214);-webkit-text-stroke:0;">IP-adres(sen)</div><div class="t" style="left:1530.40px;top:453.02px;font-size:21px;font-weight:700;color:#465466;transform:scaleX(0.9667);-webkit-text-stroke:0;">Template</div><div class="t" style="left:1692.06px;top:453.02px;font-size:21px;font-weight:700;color:#465466;transform:scaleX(0.9411);-webkit-text-stroke:0;">Aangemaakt</div><div class="t" style="left:1895.79px;top:453.02px;font-size:21px;font-weight:700;color:#465466;transform:scaleX(0.9083);-webkit-text-stroke:0;">Disk usage</div><div class="t" style="left:386.54px;top:493.12px;font-size:21px;font-weight:400;color:#475569;transform:scaleX(0.9603);">projectsl_f7@steady-mouse.sys.rootnet.io</div><div class="t" style="left:854.83px;top:493.12px;font-size:21px;font-weight:400;color:#2a6fe0;transform:scaleX(0.9732);">steady-mouse.sys.rootnet.io</div><div class="t" style="left:1175.08px;top:493.12px;font-size:21px;font-weight:400;color:#475569;transform:scaleX(0.9585);">185.173.20.37 | 2a0b:3100:20::c</div><div class="t" style="left:1528.42px;top:493.12px;font-size:21px;font-weight:400;color:#475569;transform:scaleX(0.9896);">Magento 2</div><div class="t" style="left:1693.00px;top:493.12px;font-size:21px;font-weight:400;color:#475569;transform:scaleX(0.9384);">Vandaag, 09:05</div><div class="t" style="left:1895.79px;top:493.12px;font-size:21px;font-weight:400;color:#475569;transform:scaleX(0.9082);">72.0 KB</div><div class="t" style="left:387.50px;top:591.22px;font-size:21px;font-weight:700;color:#465466;transform:scaleX(0.8925);-webkit-text-stroke:0;">Tags:</div><div class="t" style="left:456.93px;top:591.22px;font-size:21px;font-weight:400;color:#ffffff;transform:scaleX(0.9835);">Klantnaam</div><div class="t" style="left:2003.96px;top:349.52px;font-size:21px;font-weight:400;color:#475569;transform:scaleX(1.0210);">Uitgerold</div><div class="t" style="left:417.01px;top:712.56px;font-size:20.6px;font-weight:400;color:#475569;transform:scaleX(1.0469);">Metrics</div><div class="t" style="left:422.96px;top:794.76px;font-size:20.6px;font-weight:400;color:#475569;transform:scaleX(1.0198);">Instellingen</div><div class="t" style="left:417.05px;top:876.96px;font-size:20.6px;font-weight:400;color:#475569;transform:scaleX(1.0229);">Domeinnamen</div><div class="t" style="left:417.10px;top:959.16px;font-size:20.6px;font-weight:400;color:#475569;">Rewrites</div><div class="t" style="left:417.13px;top:1041.36px;font-size:20.6px;font-weight:400;color:#475569;transform:scaleX(0.9868);">Backups</div><div class="t" style="left:422.97px;top:1123.56px;font-size:20.6px;font-weight:400;color:#475569;transform:scaleX(1.0153);">Malware alerts</div><div class="t" style="left:417.04px;top:1205.76px;font-size:20.6px;font-weight:400;color:#475569;transform:scaleX(1.0321);">Deployment tools</div><div class="t" style="left:424.00px;top:1287.96px;font-size:20.6px;font-weight:400;color:#475569;transform:scaleX(0.9744);">Toegang</div><div class="t" style="left:1715.00px;top:721.12px;font-size:21px;font-weight:400;color:#475569;transform:scaleX(0.9684);">Weergeven voor:</div><div class="t" style="left:1904.00px;top:721.12px;font-size:21px;font-weight:400;color:#212529;transform:scaleX(0.9672);">Afgelopen uur</div><div class="t" style="left:1377.11px;top:769.99px;font-size:26px;font-weight:400;color:#333333;transform:scaleX(0.8923);">CPU</div><div class="t" style="left:1351.96px;top:1101.06px;font-size:26.5px;font-weight:400;color:#333333;transform:scaleX(1.0213);">Memory</div><div class="t" style="left:731.74px;top:820.32px;font-size:15.8px;font-weight:400;color:#666666;transform:scaleX(0.9564);-webkit-text-stroke:0;">100%</div><div class="t" style="left:741.27px;top:885.82px;font-size:15.8px;font-weight:400;color:#666666;transform:scaleX(0.9267);-webkit-text-stroke:0;">50%</div><div class="t" style="left:750.41px;top:950.42px;font-size:15.8px;font-weight:400;color:#666666;transform:scaleX(0.8905);-webkit-text-stroke:0;">0%</div><div class="t" style="left:718.54px;top:1141.82px;font-size:15.8px;font-weight:400;color:#666666;transform:scaleX(0.9564);-webkit-text-stroke:0;">100%</div><div class="t" style="left:728.07px;top:1207.52px;font-size:15.8px;font-weight:400;color:#666666;transform:scaleX(0.9267);-webkit-text-stroke:0;">50%</div><div class="t" style="left:737.21px;top:1273.12px;font-size:15.8px;font-weight:400;color:#666666;transform:scaleX(0.8905);-webkit-text-stroke:0;">0%</div><div class="t" style="left:788.75px;top:968.92px;font-size:15.8px;font-weight:400;color:#666666;transform:scaleX(1.0526);-webkit-text-stroke:0;">09:35</div><div class="t" style="left:894.93px;top:968.92px;font-size:15.8px;font-weight:400;color:#666666;transform:scaleX(1.0526);-webkit-text-stroke:0;">09:40</div><div class="t" style="left:1001.11px;top:968.92px;font-size:15.8px;font-weight:400;color:#666666;transform:scaleX(1.0526);-webkit-text-stroke:0;">09:45</div><div class="t" style="left:1107.29px;top:968.92px;font-size:15.8px;font-weight:400;color:#666666;transform:scaleX(1.0526);-webkit-text-stroke:0;">09:50</div><div class="t" style="left:1213.47px;top:968.92px;font-size:15.8px;font-weight:400;color:#666666;transform:scaleX(1.0526);-webkit-text-stroke:0;">09:55</div><div class="t" style="left:1319.65px;top:968.92px;font-size:15.8px;font-weight:400;color:#666666;transform:scaleX(1.0526);-webkit-text-stroke:0;">10:00</div><div class="t" style="left:1425.83px;top:968.92px;font-size:15.8px;font-weight:400;color:#666666;transform:scaleX(1.0526);-webkit-text-stroke:0;">10:05</div><div class="t" style="left:1532.01px;top:968.92px;font-size:15.8px;font-weight:400;color:#666666;transform:scaleX(1.0526);-webkit-text-stroke:0;">10:10</div><div class="t" style="left:1638.19px;top:968.92px;font-size:15.8px;font-weight:400;color:#666666;transform:scaleX(1.0526);-webkit-text-stroke:0;">10:15</div><div class="t" style="left:1744.37px;top:968.92px;font-size:15.8px;font-weight:400;color:#666666;transform:scaleX(1.0526);-webkit-text-stroke:0;">10:20</div><div class="t" style="left:1850.55px;top:968.92px;font-size:15.8px;font-weight:400;color:#666666;transform:scaleX(1.0526);-webkit-text-stroke:0;">10:25</div><div class="t" style="left:1956.73px;top:968.92px;font-size:15.8px;font-weight:400;color:#666666;transform:scaleX(1.0526);-webkit-text-stroke:0;">10:30</div><div class="t" style="left:2044.45px;top:968.92px;font-size:15.8px;font-weight:400;color:#666666;transform:scaleX(1.0526);-webkit-text-stroke:0;">10:35</div><div class="t" style="left:776.05px;top:1293.22px;font-size:15.8px;font-weight:400;color:#666666;transform:scaleX(1.0526);-webkit-text-stroke:0;">09:35</div><div class="t" style="left:883.35px;top:1293.22px;font-size:15.8px;font-weight:400;color:#666666;transform:scaleX(1.0526);-webkit-text-stroke:0;">09:40</div><div class="t" style="left:990.65px;top:1293.22px;font-size:15.8px;font-weight:400;color:#666666;transform:scaleX(1.0526);-webkit-text-stroke:0;">09:45</div><div class="t" style="left:1097.95px;top:1293.22px;font-size:15.8px;font-weight:400;color:#666666;transform:scaleX(1.0526);-webkit-text-stroke:0;">09:50</div><div class="t" style="left:1205.25px;top:1293.22px;font-size:15.8px;font-weight:400;color:#666666;transform:scaleX(1.0526);-webkit-text-stroke:0;">09:55</div><div class="t" style="left:1312.55px;top:1293.22px;font-size:15.8px;font-weight:400;color:#666666;transform:scaleX(1.0526);-webkit-text-stroke:0;">10:00</div><div class="t" style="left:1419.85px;top:1293.22px;font-size:15.8px;font-weight:400;color:#666666;transform:scaleX(1.0526);-webkit-text-stroke:0;">10:05</div><div class="t" style="left:1527.15px;top:1293.22px;font-size:15.8px;font-weight:400;color:#666666;transform:scaleX(1.0526);-webkit-text-stroke:0;">10:10</div><div class="t" style="left:1634.45px;top:1293.22px;font-size:15.8px;font-weight:400;color:#666666;transform:scaleX(1.0526);-webkit-text-stroke:0;">10:15</div><div class="t" style="left:1741.75px;top:1293.22px;font-size:15.8px;font-weight:400;color:#666666;transform:scaleX(1.0526);-webkit-text-stroke:0;">10:20</div><div class="t" style="left:1849.05px;top:1293.22px;font-size:15.8px;font-weight:400;color:#666666;transform:scaleX(1.0526);-webkit-text-stroke:0;">10:25</div><div class="t" style="left:1956.35px;top:1293.22px;font-size:15.8px;font-weight:400;color:#666666;transform:scaleX(1.0526);-webkit-text-stroke:0;">10:30</div><div class="t" style="left:2045.95px;top:1293.22px;font-size:15.8px;font-weight:400;color:#666666;transform:scaleX(1.0526);-webkit-text-stroke:0;">10:35</div><div class="t" style="left:1212.33px;top:1010.17px;font-size:17.4px;font-weight:700;color:#333333;transform:scaleX(0.9678);-webkit-text-stroke:0;">MySQL</div><div class="t" style="left:1327.06px;top:1010.17px;font-size:17.4px;font-weight:700;color:#333333;transform:scaleX(1.0419);-webkit-text-stroke:0;">php–fpm–projectsl_f7</div><div class="t" style="left:1571.66px;top:1010.17px;font-size:17.4px;font-weight:700;color:#333333;transform:scaleX(1.0444);-webkit-text-stroke:0;">nginx</div><div class="t" style="left:1212.33px;top:1341.87px;font-size:17.4px;font-weight:700;color:#333333;transform:scaleX(0.9678);-webkit-text-stroke:0;">MySQL</div><div class="t" style="left:1327.06px;top:1341.87px;font-size:17.4px;font-weight:700;color:#333333;transform:scaleX(1.0419);-webkit-text-stroke:0;">php–fpm–projectsl_f7</div><div class="t" style="left:1571.66px;top:1341.87px;font-size:17.4px;font-weight:700;color:#333333;transform:scaleX(1.0444);-webkit-text-stroke:0;">nginx</div>
<div class="t" style="left:1997.6px;top:108.4px;font-size:14px;font-weight:700;color:#fff;letter-spacing:-0.3px">13</div>
</div></div>
</body></html>
